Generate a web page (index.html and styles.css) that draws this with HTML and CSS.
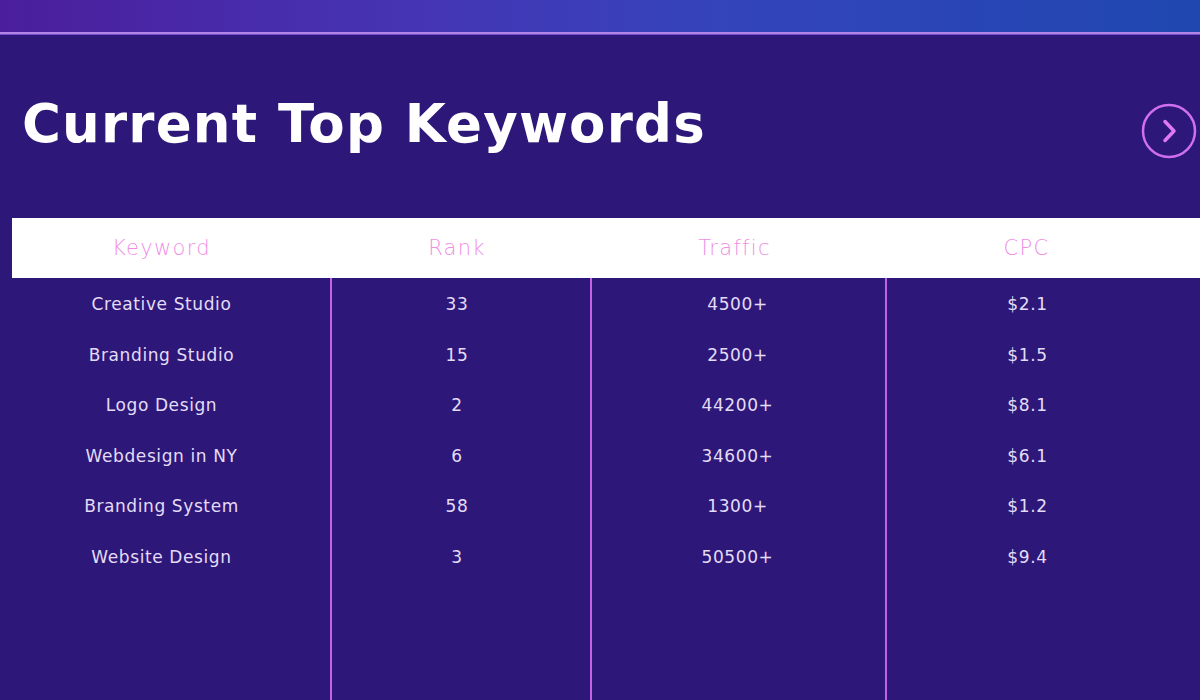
FILE: index.html
```html
<!DOCTYPE html>
<html>
<head>
<meta charset="utf-8">
<link rel="stylesheet" href="styles.css">
</head>
<body>
<div class="topbar"></div>
<main class="page">
  <header class="title-row">
    <h1 class="title">Current Top Keywords</h1>
    <button class="next" aria-label="Next">
      <svg width="58" height="58" viewBox="0 0 58 58"><circle cx="29" cy="29" r="26" fill="none" stroke="#d070f0" stroke-width="2.5"/><path d="M25 19.5 L34 29 L25 38.5" fill="none" stroke="#e078f4" stroke-width="3.5" stroke-linecap="round" stroke-linejoin="round"/></svg>
    </button>
  </header>
  <section class="table">
    <div class="row head">
      <div class="cell c1">Keyword</div>
      <div class="cell c2">Rank</div>
      <div class="cell c3">Traffic</div>
      <div class="cell c4">CPC</div>
    </div>
    <div class="body">
      <div class="col c1">
        <div class="cell">Creative Studio</div>
        <div class="cell">Branding Studio</div>
        <div class="cell">Logo Design</div>
        <div class="cell">Webdesign in NY</div>
        <div class="cell">Branding System</div>
        <div class="cell">Website Design</div>
      </div>
      <div class="col c2">
        <div class="cell">33</div>
        <div class="cell">15</div>
        <div class="cell">2</div>
        <div class="cell">6</div>
        <div class="cell">58</div>
        <div class="cell">3</div>
      </div>
      <div class="col c3">
        <div class="cell">4500+</div>
        <div class="cell">2500+</div>
        <div class="cell">44200+</div>
        <div class="cell">34600+</div>
        <div class="cell">1300+</div>
        <div class="cell">50500+</div>
      </div>
      <div class="col c4">
        <div class="cell">$2.1</div>
        <div class="cell">$1.5</div>
        <div class="cell">$8.1</div>
        <div class="cell">$6.1</div>
        <div class="cell">$1.2</div>
        <div class="cell">$9.4</div>
      </div>
    </div>
  </section>
</main>
</body>
</html>
```
FILE: styles.css
```css
* { box-sizing: border-box; }
html, body { margin: 0; padding: 0; }
body {
  width: 1200px;
  height: 700px;
  overflow: hidden;
  background: #2d1879;
  font-family: "DejaVu Sans", "Liberation Sans", sans-serif;
}
.topbar {
  height: 34px;
  background: linear-gradient(90deg, #4b1e9c 0%, #4535b4 35%, #3444bb 60%, #1f47b0 100%);
  border-bottom: 2px solid #b286e6;
  box-shadow: 0 1px 0 #7a4ad0;
}
.page {
  display: flex;
  flex-direction: column;
}
.title-row {
  display: flex;
  justify-content: space-between;
  align-items: flex-start;
  padding: 58px 2px 0 22px;
  height: 184px;
}
.title {
  margin: 0;
  color: #ffffff;
  font-family: "DejaVu Sans", "Liberation Sans", sans-serif;
  font-weight: 700;
  font-size: 53px;
  line-height: 64px;
  letter-spacing: 1.2px;
}
.next {
  margin-top: 10px;
  background: none;
  border: 0;
  padding: 0;
  width: 58px;
  height: 58px;
}
.table {
  margin-left: 12px;
  display: flex;
  flex-direction: column;
}
.row.head {
  display: grid;
  grid-template-columns: 318px 260px 295px 315px;
  height: 60px;
  background: #ffffff;
  align-items: center;
}
.head .cell {
  color: #f08ee4;
  font-family: "DejaVu Sans", "Liberation Sans", sans-serif;
  font-weight: 200;
  font-size: 21px;
  letter-spacing: 1.3px;
  text-align: center;
}
.c1 { padding-right: 19px; }
.c4 { padding-right: 32px; }
.head .c2, .head .c3 { padding-right: 6px; }
.body {
  display: grid;
  grid-template-columns: 318px 260px 295px 315px;
  height: 422px;
}
.col {
  display: flex;
  flex-direction: column;
  padding-top: 1px;
}
.col.c2, .col.c3, .col.c4 { border-left: 2px solid #c462e6; }
.col.c2 { padding-right: 8px; }
.col.c3 { padding-right: 2px; }
.col .cell {
  height: 50.6px;
  line-height: 50px;
  text-align: center;
  color: #e4dcf6;
  font-size: 17px;
  letter-spacing: 0.6px;
}
```
